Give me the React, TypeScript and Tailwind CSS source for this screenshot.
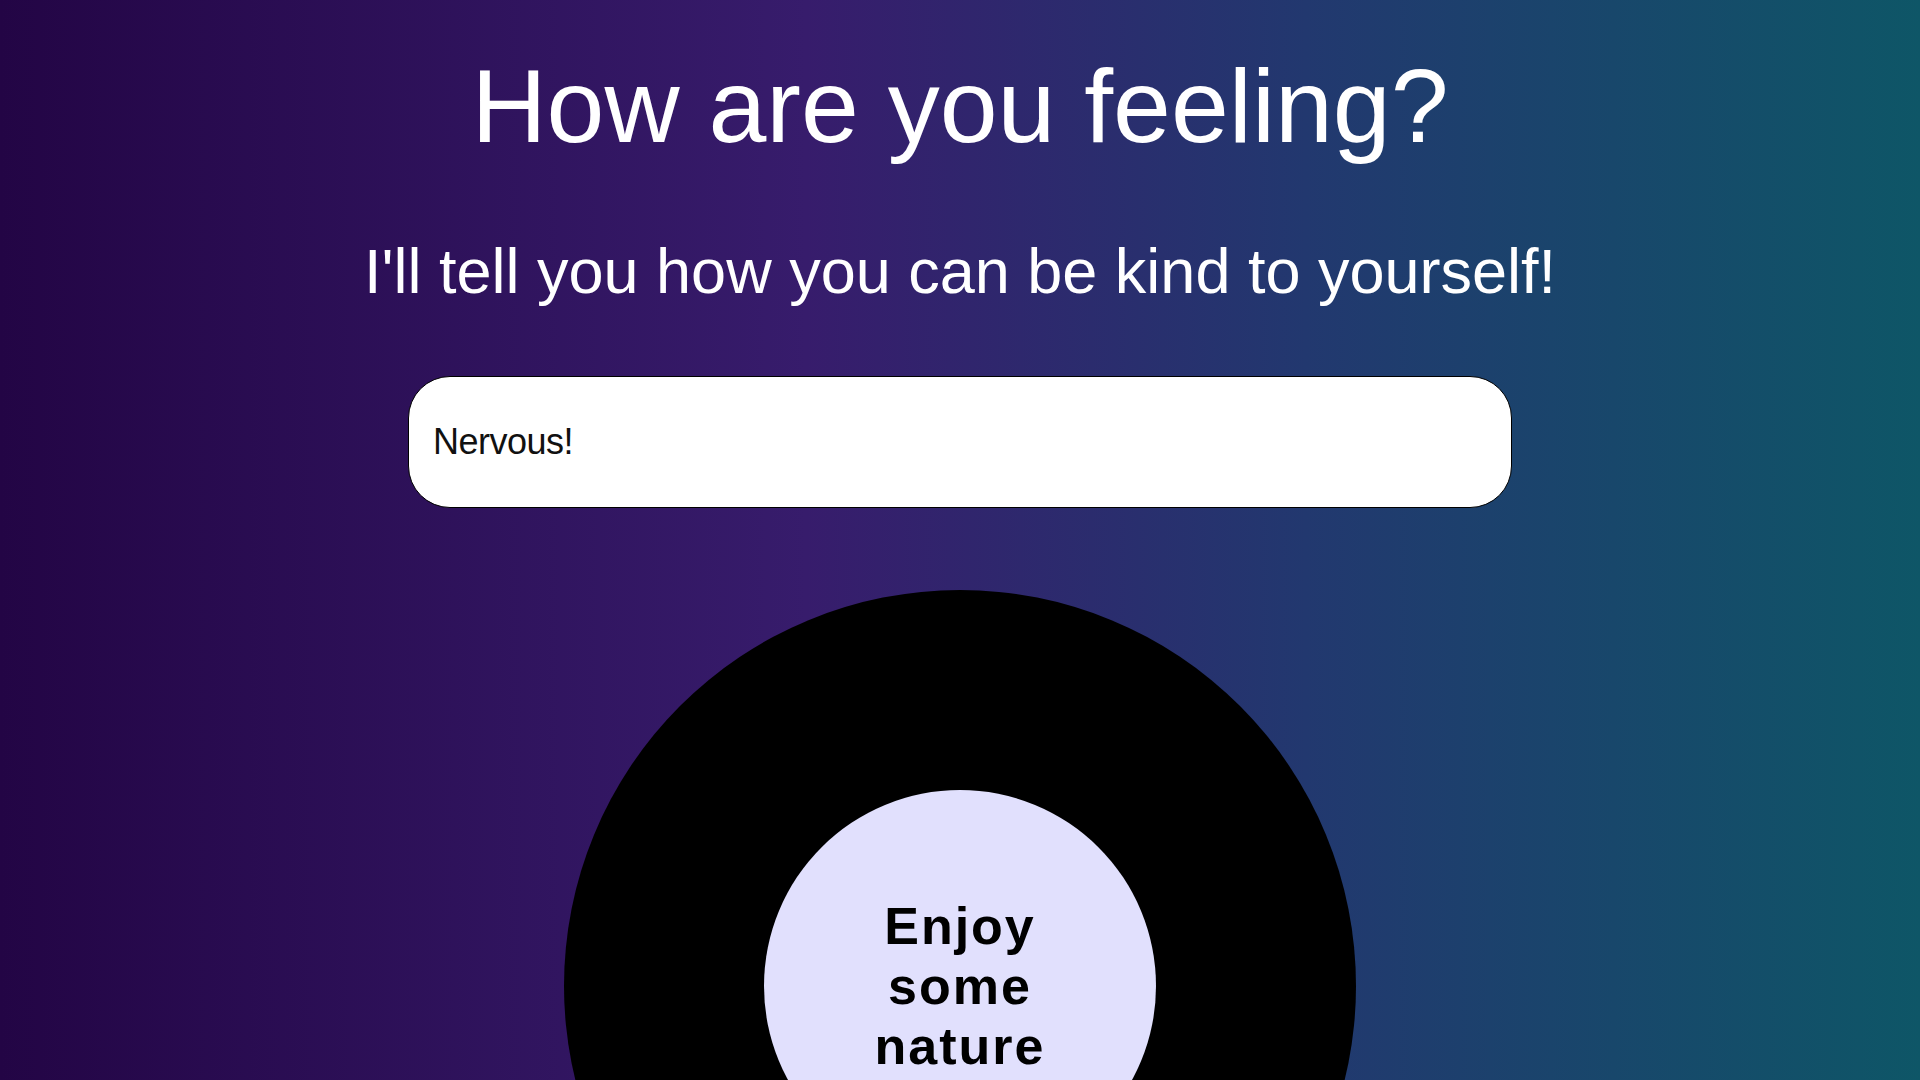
import { useState } from "react";

const App = () => {
  const [feeling, setFeeling] = useState("Nervous!");

  return (
    <div
      className="min-h-screen w-full flex flex-col items-center bg-[linear-gradient(to_right,#230545_0%,#371c6c_42%,#22386f_68%,#0e5667_100%)] pb-20"
      style={{ fontFamily: '"Liberation Sans", Arial, sans-serif' }}
    >
      <h1 className="mt-[54px] text-[104px] leading-none font-normal text-white">
        How are you feeling?
      </h1>
      <h2 className="mt-[82px] text-[63px] leading-none font-normal text-white">
        I'll tell you how you can be kind to yourself!
      </h2>
      <input
        type="text"
        value={feeling}
        onChange={(e) => setFeeling(e.target.value)}
        className="mt-[73px] w-[1104px] h-[132px] rounded-[42px] border-[1.5px] border-black bg-white pl-[24px] pr-6 text-[36px] tracking-[-0.5px] text-[#111] outline-none"
      />
      <div className="mt-[82px] w-[792px] h-[792px] shrink-0 rounded-full bg-black flex items-center justify-center">
        <div className="w-[392px] h-[392px] rounded-full bg-[#e1e0fd] flex items-center justify-center">
          <p className="w-[200px] text-center text-[52px] leading-[60px] font-bold tracking-[2px] text-black">
            Enjoy some nature
          </p>
        </div>
      </div>
    </div>
  );
};

export default App;
